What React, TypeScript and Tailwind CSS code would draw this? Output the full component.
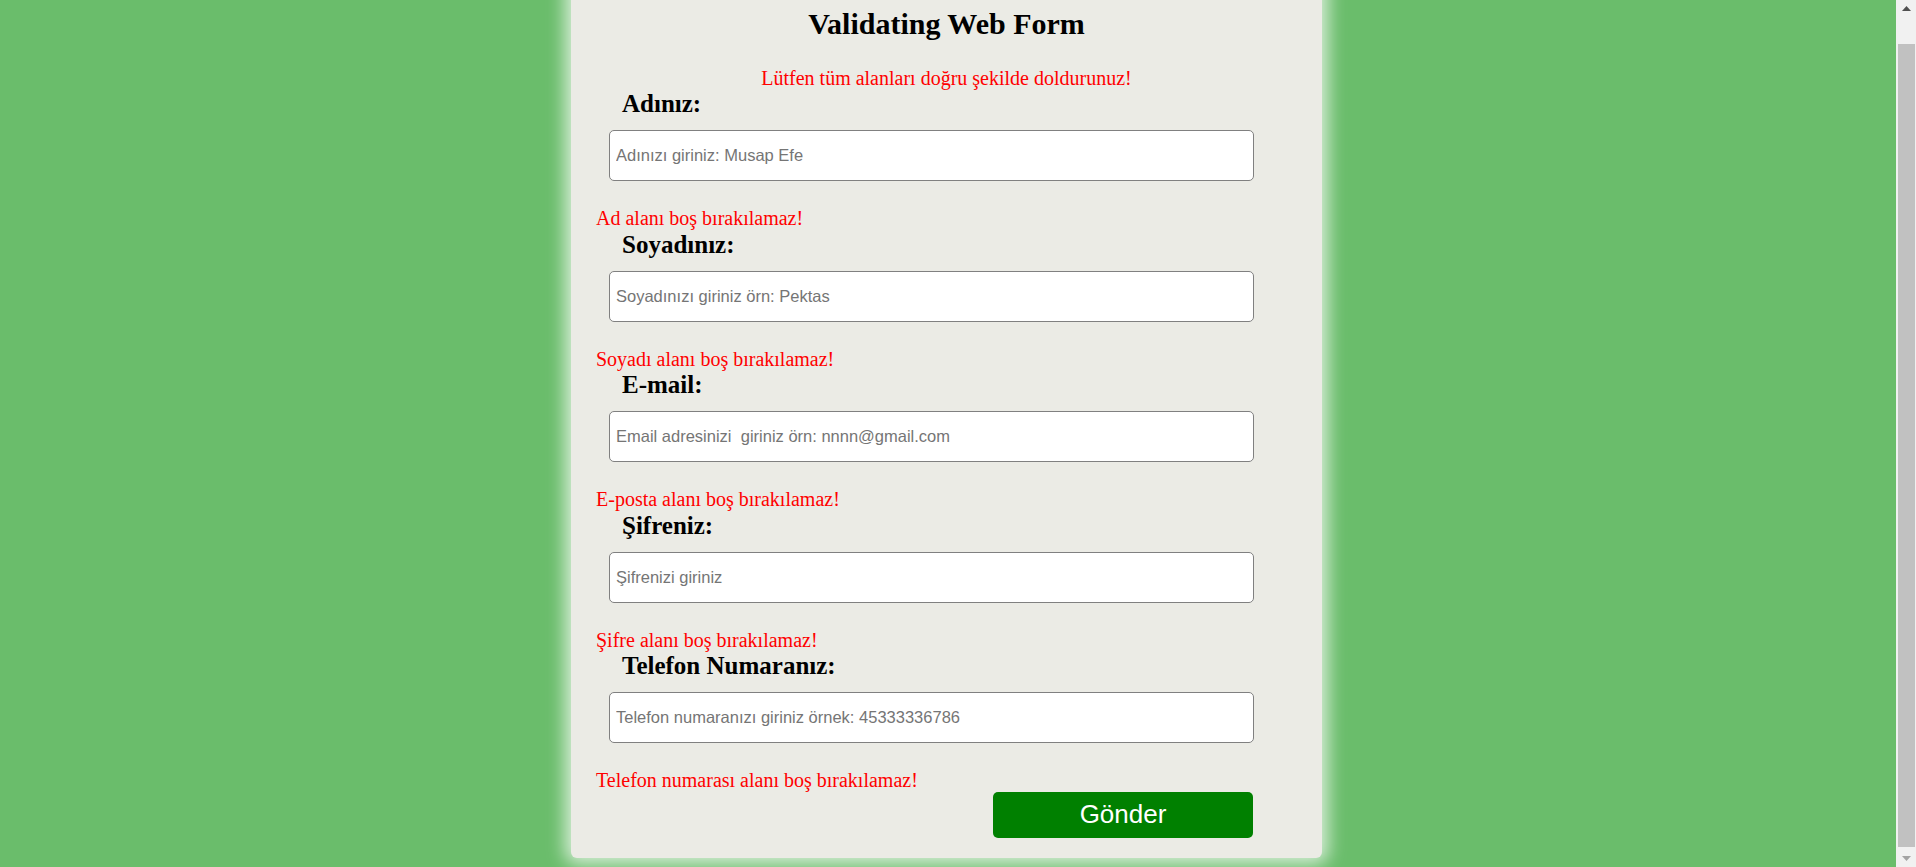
import { useEffect, useRef } from 'react';

const fields = [
  { label: 'Adınız:', placeholder: 'Adınızı giriniz: Musap Efe', error: 'Ad alanı boş bırakılamaz!', type: 'text' },
  { label: 'Soyadınız:', placeholder: 'Soyadınızı giriniz örn: Pektas', error: 'Soyadı alanı boş bırakılamaz!', type: 'text' },
  { label: 'E-mail:', placeholder: 'Email adresinizi  giriniz örn: nnnn@gmail.com', error: 'E-posta alanı boş bırakılamaz!', type: 'email' },
  { label: 'Şifreniz:', placeholder: 'Şifrenizi giriniz', error: 'Şifre alanı boş bırakılamaz!', type: 'password' },
  { label: 'Telefon Numaranız:', placeholder: 'Telefon numaranızı giriniz örnek: 45333336786', error: 'Telefon numarası alanı boş bırakılamaz!', type: 'tel' },
];

function Scrollbar() {
  return (
    <div className="flex h-full w-[20px] shrink-0 flex-col bg-[#f1f1f1]">
      <div className="flex h-[20px] items-center justify-center pb-[4px]">
        <svg width="9" height="5" viewBox="0 0 9 5">
          <polygon points="4.5,0 9,5 0,5" fill="#505050" />
        </svg>
      </div>
      <div className="flex flex-1 flex-col pt-[24px] pl-[2px] pr-[1px]">
        <div className="flex-1 bg-[#c1c1c1]" />
      </div>
      <div className="flex h-[20px] items-center justify-center pt-[2px]">
        <svg width="9" height="5" viewBox="0 0 9 5">
          <polygon points="0,0 9,0 4.5,5" fill="#a3a3a3" />
        </svg>
      </div>
    </div>
  );
}

export default function App() {
  const pageRef = useRef<HTMLDivElement>(null);

  useEffect(() => {
    if (pageRef.current) pageRef.current.scrollTop = 29;
  }, []);

  return (
    <div className="flex h-screen bg-[#6abd6b] font-['Liberation_Serif',serif]">
      <div ref={pageRef} className="flex-1 overflow-hidden">
        <div className="pt-[8px] pb-[11px] pr-[3px]">
          <form
            onSubmit={(e) => e.preventDefault()}
            className="mx-auto w-[751px] rounded-[6px] bg-[#ebebe5] pt-[28px] pb-[20px] shadow-[0_0_18px_6px_rgba(255,255,255,0.75)]"
          >
            <h1 className="text-center text-[30px] leading-[34px] font-bold text-black">Validating Web Form</h1>
            <p className="mt-[25px] text-center text-[20px] leading-[24px] text-[#ff0000]">
              Lütfen tüm alanları doğru şekilde doldurunuz!
            </p>

            {fields.map((f) => (
              <div key={f.label}>
                <h2 className="ml-[51px] text-[25px] leading-[28px] font-bold text-black">{f.label}</h2>
                <input
                  type={f.type}
                  placeholder={f.placeholder}
                  className="mt-[12px] ml-[38px] block h-[51px] w-[645px] rounded-[5px] border border-[#808080] bg-white pl-[6px] font-['Liberation_Sans',Arial,sans-serif] text-[16.5px] text-black placeholder:text-[#757575] outline-none"
                />
                <div className="mt-[26px] ml-[25px] text-[20px] leading-[23.5px] text-[#ff0000]">{f.error}</div>
              </div>
            ))}

            <div className="mt-[-1px] flex justify-end pr-[69px]">
              <button
                type="submit"
                className="h-[46px] w-[260px] rounded-[5px] bg-[#008000] font-['Liberation_Sans',Arial,sans-serif] text-[26px] text-white"
              >
                Gönder
              </button>
            </div>
          </form>
        </div>
      </div>
      <Scrollbar />
    </div>
  );
}
